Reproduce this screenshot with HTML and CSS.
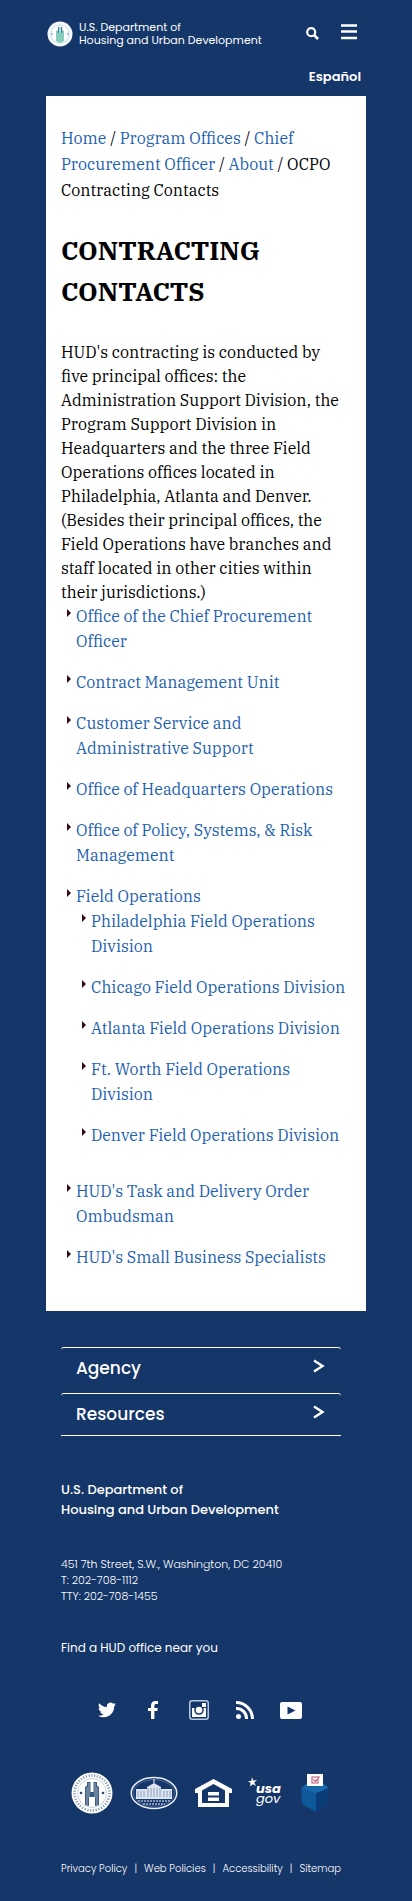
FILE: index.html
```html
<!DOCTYPE html>
<html lang="en">
<head>
<meta charset="utf-8">
<meta name="viewport" content="width=device-width, initial-scale=1">
<title>Contracting Contacts | HUD</title>
<link rel="stylesheet" href="styles.css">
</head>
<body>
<header class="site-header">
  <div class="header-bar">
    <a class="brand" href="#">
      <svg class="brand-seal" viewBox="0 0 26 26" aria-hidden="true">
        <circle cx="13" cy="13" r="12.5" fill="#f4f8fa"/>
        <circle cx="13" cy="13" r="9" fill="#fff" stroke="#c9e3e6" stroke-width="1"/>
        <path d="M9 20V10l2-1V6h1.500v6h1V6H15v3l2 1v10l-4 2z" fill="#86cdbb"/>
        <path d="M11 6h1.200v6H11zM14 6h1.200v6H14z" fill="#387ea1"/>
        <circle cx="5" cy="13" r=".8" fill="#368fb0"/><circle cx="21" cy="13" r=".8" fill="#368fb0"/>
      </svg>
      <span>U.S. Department of<br>Housing and Urban Development</span>
    </a>
    <div class="header-actions">
      <button class="icon-button" type="button" aria-label="Search">
        <svg class="search-icon" viewBox="0 0 13 13" aria-hidden="true"><circle cx="5.200" cy="5.200" r="4" fill="none" stroke="#fff" stroke-width="2.200"/><path d="M8 8l4 4" stroke="#fff" stroke-width="2.600"/></svg>
      </button>
      <button class="icon-button" type="button" aria-label="Menu">
        <svg class="menu-icon" viewBox="0 0 16 16" aria-hidden="true"><path d="M0 1.500h16M0 7.500h16M0 14h16" stroke="#fff" stroke-width="2.400"/></svg>
      </button>
    </div>
  </div>
  <a class="language" href="#" lang="es">Español</a>
</header>

<main class="content">
  <nav class="breadcrumb" aria-label="Breadcrumb">
    <a href="#">Home</a> / <a href="#">Program Offices</a> / <a href="#">Chief Procurement Officer</a> / <a href="#">About</a> / OCPO Contracting Contacts
  </nav>
  <h1>CONTRACTING CONTACTS</h1>
  <p class="intro">HUD's contracting is conducted by five principal offices: the Administration Support Division, the Program Support Division in Headquarters and the three Field Operations offices located in Philadelphia, Atlanta and Denver. (Besides their principal offices, the Field Operations have branches and staff located in other cities within their jurisdictions.)</p>
  <ul class="office-list">
    <li><a href="#">Office of the Chief Procurement Officer</a></li>
    <li><a href="#">Contract Management Unit</a></li>
    <li><a href="#">Customer Service and Administrative Support</a></li>
    <li><a href="#">Office of Headquarters Operations</a></li>
    <li><a href="#">Office of Policy, Systems, &amp; Risk Management</a></li>
    <li><a href="#">Field Operations</a>
      <ul class="office-list">
        <li><a href="#">Philadelphia Field Operations Division</a></li>
        <li><a href="#">Chicago Field Operations Division</a></li>
        <li><a href="#">Atlanta Field Operations Division</a></li>
        <li><a href="#">Ft. Worth Field Operations Division</a></li>
        <li><a href="#">Denver Field Operations Division</a></li>
      </ul>
    </li>
    <li><a href="#">HUD's Task and Delivery Order Ombudsman</a></li>
    <li><a href="#">HUD's Small Business Specialists</a></li>
  </ul>
</main>

<footer class="site-footer">
  <div class="accordion">
    <button class="accordion-row" type="button">Agency
      <svg class="chevron" viewBox="0 0 12 14" aria-hidden="true"><path d="M1 1.500l8.500 5.500L1 12.500" fill="none" stroke="#fff" stroke-width="2.400"/></svg>
    </button>
    <button class="accordion-row" type="button">Resources
      <svg class="chevron" viewBox="0 0 12 14" aria-hidden="true"><path d="M1 1.500l8.500 5.500L1 12.500" fill="none" stroke="#fff" stroke-width="2.400"/></svg>
    </button>
  </div>
  <p class="department">U.S. Department of<br>Housing and Urban Development</p>
  <address class="address">451 7th Street, S.W., Washington, DC 20410<br>T: 202-708-1112<br>TTY: 202-708-1455</address>
  <a class="find-office" href="#">Find a HUD office near you</a>

  <div class="social">
    <a href="#" aria-label="Twitter"><svg width="18" height="18" viewBox="0 0 24 24" aria-hidden="true"><path fill="#fff" d="M24 4.560a9.800 9.800 0 0 1-2.830.780 4.900 4.900 0 0 0 2.170-2.720 9.900 9.900 0 0 1-3.130 1.190 4.920 4.920 0 0 0-8.390 4.490A14 14 0 0 1 1.670 3.150a4.930 4.930 0 0 0 1.520 6.570 4.900 4.900 0 0 1-2.230-.610v.060a4.930 4.930 0 0 0 3.950 4.830 5 5 0 0 1-2.220.080 4.930 4.930 0 0 0 4.600 3.420A9.900 9.900 0 0 1 0 19.540a13.900 13.900 0 0 0 7.550 2.210c9.050 0 14-7.500 14-14v-.630A10 10 0 0 0 24 4.560z"/></svg></a>
    <a href="#" aria-label="Facebook"><svg width="10" height="18" viewBox="0 0 10 18" aria-hidden="true"><path fill="#fff" d="M3 18V10H0V7h3V4.500C3 1.500 4.800 0 7.400 0H10v3H8.200C6.800 3 6.400 3.600 6.400 4.800V7h3.400l-.5 3H6.400v8z"/></svg></a>
    <a href="#" aria-label="Instagram"><svg width="20" height="20" viewBox="0 0 20 20" aria-hidden="true"><rect x=".75" y=".75" width="18.500" height="18.500" rx="2.500" fill="none" stroke="#b8c8dd" stroke-width="1.500"/><path fill="#fff" d="M3 8h2.500a4.900 4.900 0 1 0 9 0H17v9H3z"/><circle cx="10" cy="10" r="3.300" fill="#fff"/><path fill="#fff" d="M13 3h4v4h-4z"/></svg></a>
    <a href="#" aria-label="RSS"><svg width="18" height="18" viewBox="0 0 18 18" aria-hidden="true"><circle cx="2.500" cy="15.500" r="2.500" fill="#fff"/><path d="M0 7.500A10 10 0 0 1 10.500 18M0 1.500A16.500 16.500 0 0 1 16.500 18" fill="none" stroke="#fff" stroke-width="3"/></svg></a>
    <a href="#" aria-label="YouTube"><svg width="22" height="17" viewBox="0 0 22 17" aria-hidden="true"><rect width="22" height="17" rx="2" fill="#fff"/><path fill="#153669" d="M7.500 4.500l8 4-8 4z"/></svg></a>
  </div>

  <div class="partners">
    <a href="#" aria-label="Department seal"><svg width="42" height="42" viewBox="0 0 42 42" aria-hidden="true"><circle cx="21" cy="21" r="20.500" fill="#fff"/><circle cx="21" cy="21" r="17.500" fill="none" stroke="#8298b2" stroke-width="2.600" stroke-dasharray="1.200 1.600"/><circle cx="21" cy="21" r="14.500" fill="#fff" stroke="#9fb0c4" stroke-width=".6"/><path fill="#3d5c82" d="M14 33V15l2-1.500V10h3.500v10h3V10H26v3.500l2 1.500v18l-4 1v-9h-6v9z"/><path d="M16 15v18M18 11v15M24 11v15M26 15v18" stroke="#bccadb" stroke-width=".7"/><circle cx="10" cy="21" r="1.300" fill="#24466f"/><circle cx="32" cy="21" r="1.300" fill="#24466f"/></svg></a>
    <a href="#" aria-label="The White House"><svg width="48" height="34" viewBox="0 0 48 34" aria-hidden="true"><ellipse cx="24" cy="17" rx="22.800" ry="15.500" fill="#17376b" stroke="#e9eef5" stroke-width="1.500"/><ellipse cx="24" cy="17" rx="20.500" ry="13.300" fill="none" stroke="#7089ae" stroke-width=".6"/><path fill="#dae3ef" d="M6 13h11v-2l7-4 7 4v2h11v10H6z"/><path d="M24 3v4" stroke="#fff"/><path d="M8 15v6M11 15v6M14 15v6M18 12v9M21 12v9M24 12v9M27 12v9M30 12v9M34 15v6M37 15v6M40 15v6" stroke="#7d93b3" stroke-width=".8"/><path d="M8 25h32M13 28h22" stroke="#a6b8d0" stroke-width="1.500" stroke-dasharray="2 1"/></svg></a>
    <a href="#" aria-label="Equal Housing Opportunity"><svg width="37" height="28" viewBox="0 0 37 28" aria-hidden="true"><path fill="#fff" fill-rule="evenodd" d="M18.500 0L37 10v4h-3v14H3V14H0v-4zM18.500 5L7 11.500V24h23V11.500z"/><path fill="#fff" d="M13 13h11v3.500H13zM13 18.500h11V22H13z"/></svg></a>
    <a href="#" aria-label="USA.gov"><svg width="36" height="32" viewBox="0 0 36 32" aria-hidden="true"><path fill="#fff" d="M4 0l1.200 3.500L9 3 6.200 5.400 8 9 4.800 7.200 2 9.500 2.600 6 0 4h3.300z"/><text class="usa" x="8" y="16">usa</text><text class="gov" x="8" y="26">gov</text></svg></a>
    <a href="#" aria-label="Vote"><svg width="28" height="38" viewBox="0 0 28 38" aria-hidden="true"><path fill="#1768aa" d="M0 14l5-4h18l5 4-13 6z"/><path fill="#0d599a" d="M0 14l15 5v19L1 30z"/><path fill="#0a3d77" d="M15 19l13-5-1 17-12 7z"/><path fill="#fff" d="M6 0h16v12H6z"/><path d="M11 3h6v6h-6zM12.500 5.500l2 2 4-5" fill="none" stroke="#c25270" stroke-width="1.100"/></svg></a>
  </div>

  <nav class="legal" aria-label="Legal">
    <a href="#">Privacy Policy</a><span>|</span><a href="#">Web Policies</a><span>|</span><a href="#">Accessibility</a><span>|</span><a href="#">Sitemap</a>
  </nav>
</footer>
</body>
</html>
```
FILE: styles.css
```css
* { box-sizing: border-box; }
body {
  margin: 0;
  background: #153669;
  color: #000;
  font-family: "IBM Plex Serif", "Liberation Serif", serif;
  font-size: 16px;
}
a { color: #1d5fb0; text-decoration: none; }
svg { display: block; }
button { font: inherit; color: inherit; background: none; border: 0; padding: 0; }

.site-header, .site-footer { font-family: Poppins, Inter, sans-serif; color: #fff; }
.site-header a, .site-footer a { color: inherit; }

.site-header { padding: 21px 51px 0 47px; }
.header-bar { display: flex; justify-content: space-between; align-items: flex-start; }
.brand { display: flex; align-items: center; gap: 6px; font-size: 11px; line-height: 13px; white-space: nowrap; }
.brand-seal { width: 26px; height: 26px; }
.header-actions { display: flex; gap: 22px; padding: 3px 4px 0 0; }
.search-icon { width: 13px; height: 13px; margin-top: 3px; }
.menu-icon { width: 16px; height: 16px; }
.language { display: block; text-align: right; font-size: 13px; font-weight: 600; line-height: 20px; margin-top: 20px; }

.content { margin: 9px 46px 0; padding: 29px 15px 25px; background: #fff; }
.breadcrumb { line-height: 26px; }
h1 { margin: 27px 0 28px; font-size: 26px; line-height: 41px; font-weight: 700; }
.intro { margin: 0; padding-right: 10px; line-height: 24px; }
.office-list { list-style: none; margin: 0; padding: 0 0 0 15px; line-height: 25px; }
.office-list li { position: relative; margin-bottom: 16px; }
.office-list .office-list { padding-bottom: 15px; }
.office-list .office-list li:last-child { margin-bottom: 0; }
.office-list li::before {
  content: "";
  position: absolute;
  left: -9px;
  top: 5px;
  border-left: 4px solid #300b14;
  border-top: 4px solid transparent;
  border-bottom: 4px solid transparent;
}

.site-footer { padding: 36px 61px 23px; }
.accordion { margin-right: 10px; border-bottom: 1px solid #fff; }
.accordion-row {
  display: flex;
  align-items: flex-start;
  justify-content: space-between;
  width: 100%;
  height: 42px;
  padding: 8px 16px 0 15px;
  border-top: 1px solid #fff;
  border-radius: 3px;
  font-size: 17px;
  font-weight: 500;
  line-height: 24px;
}
.accordion-row + .accordion-row { margin-top: 4px; }
.chevron { width: 12px; height: 14px; margin-top: 3px; }
.department { margin: 44px 0 0; font-size: 13px; font-weight: 500; line-height: 20px; white-space: nowrap; }
.address { margin-top: 36px; font-size: 11px; font-style: normal; font-weight: 300; line-height: 16px; }
.find-office { display: block; margin-top: 34px; font-size: 12px; line-height: 20px; }
.social { display: grid; grid-template-columns: repeat(5, 1fr); align-items: center; justify-items: center; margin: 42px 37px 0 23px; }
.partners { display: flex; align-items: center; justify-content: space-between; margin: 52px 22px 0 10px; }
.usa, .gov { font-family: Poppins, Inter, sans-serif; font-size: 13px; font-style: italic; fill: #fff; }
.usa { font-weight: 700; }
.legal { display: flex; justify-content: space-between; margin: 45px 10px 0 0; font-size: 10px; font-weight: 300; line-height: 20px; white-space: nowrap; }
```
